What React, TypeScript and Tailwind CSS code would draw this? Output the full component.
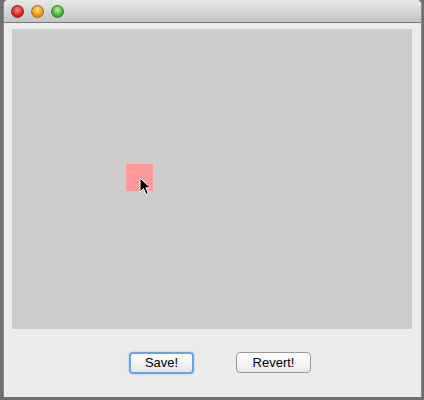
import React from 'react';

function Light({ from, to, border }: { from: string; to: string; border: string }) {
  return (
    <span
      className="w-[13px] h-[13px] rounded-full border"
      style={{ background: `radial-gradient(circle at 50% 35%, ${from}, ${to} 70%)`, borderColor: border }}
    />
  );
}

export default function App() {
  return (
    <div className="w-[424px] h-[400px] bg-[#6f6f6f] flex pl-[3px] pr-[2px] pb-[3px] font-['Lucida_Grande','Liberation_Sans',sans-serif]">
      <div className="flex-1 flex flex-col bg-[#ececec] rounded-t-[5px] border-x border-[#8a8a8a] overflow-hidden">
        {/* title bar */}
        <div className="h-[23px] shrink-0 flex items-center gap-[7px] pl-[7px] bg-gradient-to-b from-[#e8e8e8] to-[#c4c4c4] border-b border-[#7a7a7a]">
          <Light from="#ff8a80" to="#d0141a" border="#9a1a1a" />
          <Light from="#ffe08a" to="#e08a00" border="#a66a10" />
          <Light from="#b8f0a0" to="#38a82c" border="#2e7a22" />
        </div>

        {/* canvas */}
        <div className="mt-[6px] ml-[8px] mr-[9px] h-[300px] bg-[#cccccc] relative">
          <div className="absolute left-[114px] top-[135px] w-[27px] h-[27px] bg-[#ff9999]" />
          <svg className="absolute left-[127px] top-[148px]" width="14" height="20" viewBox="0 0 14 20">
            <path d="M1 1 L1 15 L4.5 11.5 L7 17.5 L9.3 16.5 L6.9 10.8 L11.5 10.8 Z" fill="#000" stroke="#fff" strokeWidth="1" />
          </svg>
        </div>

        {/* buttons */}
        <div className="flex-1 flex items-center justify-center gap-[42px] pl-[15px] pb-[1px]">
          <button className="w-[65px] h-[22px] rounded-[4px] border-2 border-[#6aa3e0] bg-gradient-to-b from-[#ffffff] to-[#e6e6e6] text-[13px] text-black leading-none shadow-[0_0_2px_#8ab8ea]">
            Save!
          </button>
          <button className="w-[75px] h-[21px] rounded-[4px] border border-[#9a9a9a] bg-gradient-to-b from-[#ffffff] to-[#ebebeb] text-[13px] text-black leading-none">
            Revert!
          </button>
        </div>
      </div>
    </div>
  );
}
